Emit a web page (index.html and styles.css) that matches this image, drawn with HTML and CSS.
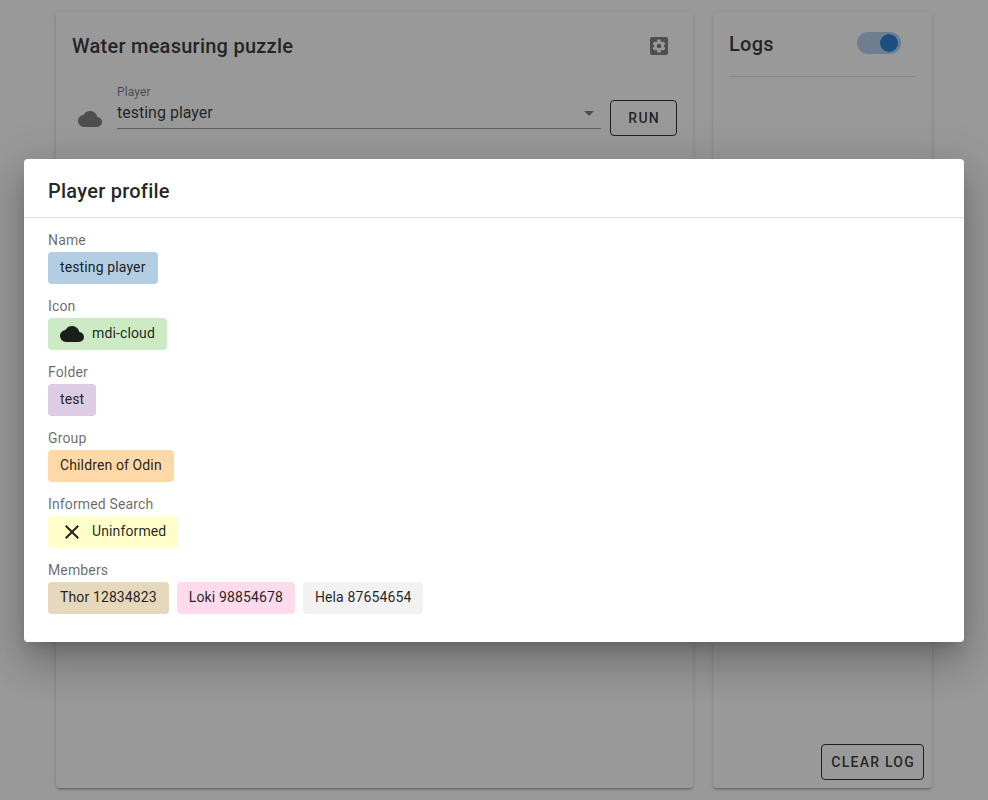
FILE: index.html
```html
<!doctype html>
<html>
  <head>
    <meta charset="utf-8">
    <title>Water measuring puzzle</title>
    <link rel="stylesheet" href="styles.css">
  </head>
  <body>
    <div id="app">
      <main class="page">
        <section class="card puzzle">
          <header class="puzzle-head">
            <h1 class="card-title">Water measuring puzzle</h1>
            <svg class="icon cog" viewBox="0 0 24 24">
              <rect x="3" y="3" width="18" height="18" rx="2"/>
              <path class="cog-gear" transform="matrix(.65 0 0 .65 4.2 4.2)" d="M12,15.5A3.5,3.5 0 0,1 8.5,12A3.5,3.5 0 0,1 12,8.5A3.5,3.5 0 0,1 15.5,12A3.5,3.5 0 0,1 12,15.5M19.43,12.97C19.47,12.65 19.5,12.33 19.5,12C19.5,11.67 19.47,11.34 19.43,11L21.54,9.37C21.73,9.22 21.78,8.95 21.66,8.73L19.66,5.27C19.54,5.05 19.27,4.96 19.05,5.05L16.56,6.05C16.04,5.66 15.5,5.32 14.87,5.07L14.5,2.42C14.46,2.18 14.25,2 14,2H10C9.75,2 9.54,2.18 9.5,2.42L9.13,5.07C8.5,5.32 7.96,5.66 7.44,6.05L4.95,5.05C4.73,4.96 4.46,5.05 4.34,5.27L2.34,8.73C2.21,8.95 2.27,9.22 2.46,9.37L4.57,11C4.53,11.34 4.5,11.67 4.5,12C4.5,12.33 4.53,12.65 4.57,12.97L2.46,14.63C2.27,14.78 2.21,15.05 2.34,15.27L4.34,18.73C4.46,18.95 4.73,19.03 4.95,18.95L7.44,17.94C7.96,18.34 8.5,18.68 9.13,18.93L9.5,21.58C9.54,21.82 9.75,22 10,22H14C14.25,22 14.46,21.82 14.5,21.58L14.87,18.93C15.5,18.67 16.04,18.34 16.56,17.94L19.05,18.95C19.27,19.03 19.54,18.95 19.66,18.73L21.66,15.27C21.78,15.05 21.73,14.78 21.54,14.63L19.43,12.97Z"/>
            </svg>
          </header>
          <div class="player-row">
            <svg class="icon player-icon" viewBox="0 0 24 24"><path d="M19.35,10.03C18.67,6.59 15.64,4 12,4C9.11,4 6.6,5.64 5.35,8.03C2.34,8.36 0,10.9 0,14A6,6 0 0,0 6,20H19A5,5 0 0,0 24,15C24,12.36 21.95,10.22 19.35,10.03Z"/></svg>
            <div class="select">
              <label class="select-label">Player</label>
              <div class="select-value">
                <span>testing player</span>
                <span class="caret"></span>
              </div>
            </div>
            <button class="btn run-btn">Run</button>
          </div>
        </section>
        <aside class="card logs">
          <header class="logs-head">
            <h2 class="card-title logs-title">Logs</h2>
            <div class="switch"><span class="switch-knob"></span></div>
          </header>
          <div class="logs-body"></div>
          <div class="logs-foot">
            <button class="btn clear-btn">Clear log</button>
          </div>
        </aside>
      </main>

      <div class="scrim"></div>

      <div class="dialog">
        <h2 class="dialog-title">Player profile</h2>
        <div class="dialog-body">
          <div class="field">
            <div class="field-label">Name</div>
            <div class="chips"><span class="chip blue">testing player</span></div>
          </div>
          <div class="field">
            <div class="field-label">Icon</div>
            <div class="chips">
              <span class="chip green">
                <svg class="icon chip-icon" viewBox="0 0 24 24"><path d="M19.35,10.03C18.67,6.59 15.64,4 12,4C9.11,4 6.6,5.64 5.35,8.03C2.34,8.36 0,10.9 0,14A6,6 0 0,0 6,20H19A5,5 0 0,0 24,15C24,12.36 21.95,10.22 19.35,10.03Z"/></svg>
                mdi-cloud
              </span>
            </div>
          </div>
          <div class="field">
            <div class="field-label">Folder</div>
            <div class="chips"><span class="chip purple">test</span></div>
          </div>
          <div class="field">
            <div class="field-label">Group</div>
            <div class="chips"><span class="chip orange">Children of Odin</span></div>
          </div>
          <div class="field">
            <div class="field-label">Informed Search</div>
            <div class="chips">
              <span class="chip yellow">
                <svg class="icon chip-icon" viewBox="0 0 24 24"><path d="M19,6.41L17.59,5L12,10.59L6.41,5L5,6.41L10.59,12L5,17.59L6.41,19L12,13.41L17.59,19L19,17.59L13.41,12L19,6.41Z"/></svg>
                Uninformed
              </span>
            </div>
          </div>
          <div class="field">
            <div class="field-label">Members</div>
            <div class="chips">
              <span class="chip tan">Thor 12834823</span>
              <span class="chip pink">Loki 98854678</span>
              <span class="chip grey">Hela 87654654</span>
            </div>
          </div>
        </div>
      </div>
    </div>
  </body>
</html>
```

FILE: styles.css
```css
* {
  box-sizing: border-box;
  margin: 0;
  padding: 0;
}

html,
body {
  height: 100%;
  overflow: hidden;
}

body {
  background-color: #fff;
  color: rgba(0, 0, 0, .87);
  font-family: Roboto, "Liberation Sans", sans-serif;
}

#app {
  position: relative;
  height: 100%;
}

.icon {
  display: block;
  width: 24px;
  height: 24px;
  fill: currentColor;
  flex: none;
}

/* page behind the dialog */
.page {
  display: flex;
  gap: 20px;
  height: 100%;
  padding: 12px 56px;
}

.card {
  display: flex;
  flex-direction: column;
  background-color: #fff;
  border-radius: 4px;
  box-shadow: 0 3px 1px -2px rgba(0, 0, 0, .2), 0 2px 2px 0 rgba(0, 0, 0, .14), 0 1px 5px 0 rgba(0, 0, 0, .12);
}

.card-title {
  font-size: 20px;
  font-weight: 500;
  line-height: 32px;
  letter-spacing: .25px;
}

.puzzle {
  width: 637px;
  padding: 18px 16px;
}

.puzzle-head {
  display: flex;
  align-items: center;
  justify-content: space-between;
  padding-right: 6px;
}

.cog {
  color: rgba(0, 0, 0, .54);
}

.cog-gear {
  fill: #fff;
}

.player-row {
  display: flex;
  align-items: flex-end;
  margin-top: 23px;
}

.player-icon {
  color: rgba(0, 0, 0, .54);
  margin: 0 0 5px 6px;
}

.select {
  flex: 1;
  margin-left: 15px;
  margin-bottom: 7px;
  border-bottom: 1px solid rgba(0, 0, 0, .42);
}

.select-label {
  display: block;
  margin-bottom: 2px;
  font-size: 12px;
  line-height: 14px;
  letter-spacing: .1px;
  color: rgba(0, 0, 0, .6);
}

.select-value {
  display: flex;
  align-items: center;
  justify-content: space-between;
  font-size: 16px;
  line-height: 24px;
  padding-bottom: 3px;
}

.caret {
  width: 0;
  height: 0;
  margin-right: 7px;
  border-left: 5px solid transparent;
  border-right: 5px solid transparent;
  border-top: 5px solid rgba(0, 0, 0, .54);
}

.btn {
  height: 36px;
  border: 1px solid rgba(0, 0, 0, .87);
  border-radius: 4px;
  background: transparent;
  color: rgba(0, 0, 0, .87);
  font-family: inherit;
  font-size: 14px;
  font-weight: 500;
  letter-spacing: 1.25px;
  text-transform: uppercase;
}

.run-btn {
  margin-left: 9px;
  padding: 0 16px 0 17px;
}

.logs {
  width: 219px;
  padding: 16px;
}

.logs-head {
  display: flex;
  align-items: center;
  justify-content: space-between;
  height: 49px;
  padding-bottom: 16px;
  padding-right: 15px;
  border-bottom: 1px solid rgba(0, 0, 0, .12);
}

.switch {
  display: flex;
  align-items: center;
  justify-content: flex-end;
  width: 44px;
  height: 22px;
  margin-bottom: 2px;
  padding-right: 3px;
  border-radius: 11px;
  background-color: rgba(25, 118, 210, .36);
}

.switch-knob {
  width: 18px;
  height: 18px;
  border-radius: 50%;
  background-color: #1976d2;
}

.logs-body {
  flex: 1;
}

.logs-foot {
  display: flex;
  justify-content: flex-end;
  margin-right: -8px;
  margin-bottom: -8px;
}

.clear-btn {
  padding: 0 8px 0 9px;
}

/* overlay */
.scrim {
  position: absolute;
  inset: 0;
  background-color: rgba(33, 33, 33, .46);
}

.dialog {
  position: absolute;
  top: 159px;
  left: 24px;
  right: 24px;
  background-color: #fff;
  border-radius: 4px;
  box-shadow: 0 11px 15px -7px rgba(0, 0, 0, .2), 0 24px 38px 3px rgba(0, 0, 0, .14), 0 9px 46px 8px rgba(0, 0, 0, .12);
}

.dialog-title {
  padding: 16px 24px 10px;
  border-bottom: 1px solid rgba(0, 0, 0, .12);
  font-size: 20px;
  font-weight: 500;
  line-height: 32px;
  letter-spacing: .25px;
}

.dialog-body {
  display: flex;
  flex-direction: column;
  gap: 12px;
  padding: 12px 24px 28px;
}

.field-label {
  height: 22px;
  padding-bottom: 2px;
  font-size: 14px;
  line-height: 20px;
  letter-spacing: .14px;
  color: rgba(0, 0, 0, .6);
}

.chips {
  display: flex;
  gap: 8px;
}

.chip {
  display: inline-flex;
  align-items: center;
  height: 32px;
  padding: 0 12px 2px;
  border-radius: 4px;
  font-size: 14px;
  letter-spacing: .125px;
}

.chip-icon {
  margin-top: 2px;
  margin-right: 8px;
}

.blue { background-color: #b3cde3; }
.green { background-color: #ccebc5; }
.purple { background-color: #decbe4; }
.orange { background-color: #fed9a6; }
.yellow { background-color: #ffffcc; }
.tan { background-color: #e5d8bd; }
.pink { background-color: #fddaec; }
.grey { background-color: #f2f2f2; }
```
